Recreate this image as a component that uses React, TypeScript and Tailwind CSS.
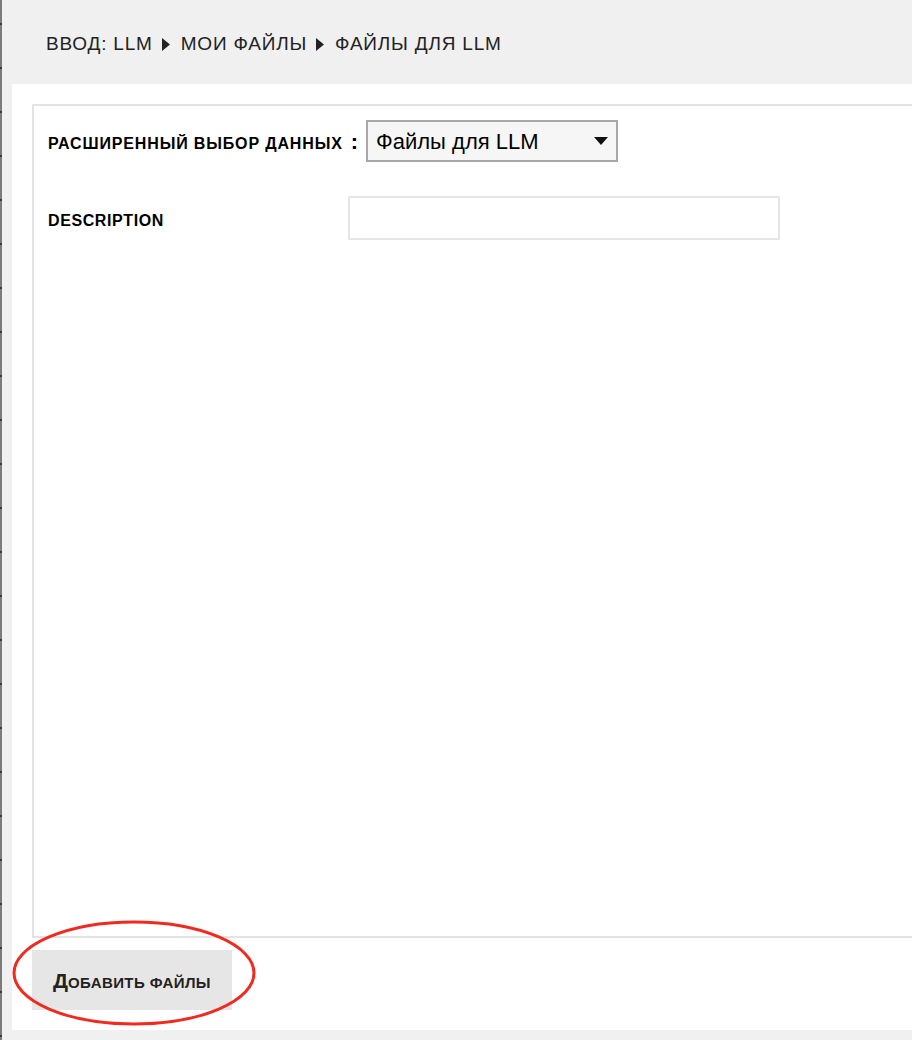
import React from 'react';

const Triangle: React.FC = () => (
    <svg width="8" height="13" viewBox="0 0 8 13" className="ml-[9px] mr-[11px] inline-block">
        <path d="M0 0 L8 6.5 L0 13 Z" fill="#222" />
    </svg>
);

export default function App() {
    return (
        <div className="relative flex h-[1040px] w-[912px] overflow-hidden bg-[#f0f0f0] font-['Liberation_Sans',Arial,sans-serif] text-[#222]">
            {/* Left window edge */}
            <div className="w-[2px] shrink-0 bg-[repeating-linear-gradient(to_bottom,#7b7b7b_0px,#7b7b7b_23px,#3a3a3a_23px,#3a3a3a_25px,#7b7b7b_25px,#7b7b7b_44px)]" />

            <div className="flex min-w-0 flex-1 flex-col">
                {/* Breadcrumb */}
                <div className="flex h-[84px] shrink-0 items-center pl-[44px] pt-[4px] text-[19px] uppercase tracking-[0.8px]">
                    <span>Ввод: LLM</span>
                    <Triangle />
                    <span>Мои файлы</span>
                    <Triangle />
                    <span>Файлы для LLM</span>
                </div>

                {/* Panel */}
                <div className="ml-[10px] mb-[10px] flex flex-1 flex-col bg-white pl-[20px] pt-[20px]">
                    <div className="h-[834px] border-y-2 border-l-2 border-[#e3e3e3] pl-[14px] pt-[14px]">
                        <div className="flex items-center">
                            <span className="pt-[5px] text-[16px] font-bold uppercase tracking-[0.85px] text-black">
                                Расширенный выбор данных
                            </span>
                            <span className="ml-[8px] mr-[8px] pt-[2px] text-[22px] font-bold leading-none text-black">:</span>
                            <div className="flex h-[42px] w-[252px] items-center justify-between border-2 border-[#a8a8a8] bg-[#f6f6f6] pl-[8px] pr-[8px]">
                                <span className="text-[22px] text-black">Файлы для LLM</span>
                                <svg width="14" height="8" viewBox="0 0 14 8">
                                    <path d="M0 0 L14 0 L7 8 Z" fill="#111" />
                                </svg>
                            </div>
                        </div>

                        <div className="mt-[34px] flex items-center">
                            <span className="w-[300px] pt-[5px] text-[16px] font-bold uppercase tracking-[0.6px] text-black">
                                Description
                            </span>
                            <div className="h-[44px] w-[432px] border-2 border-[#e6e6e6] bg-white" />
                        </div>
                    </div>

                    <div className="pt-[12px]">
                        <button className="flex h-[60px] w-[200px] items-baseline justify-center bg-[#e6e6e6] pt-[20px] font-bold text-[#222]">
                            <span className="text-[21px] leading-none">Д</span>
                            <span className="text-[15px] uppercase leading-none tracking-[0.4px]">обавить файлы</span>
                        </button>
                    </div>
                </div>
            </div>

            {/* Red annotation ellipse */}
            <svg className="pointer-events-none absolute left-[11px] top-[919px]" width="246" height="108" viewBox="0 0 246 108">
                <ellipse cx="123" cy="54" rx="120" ry="51" fill="none" stroke="#f02a1f" strokeWidth="3" />
            </svg>
        </div>
    );
}
